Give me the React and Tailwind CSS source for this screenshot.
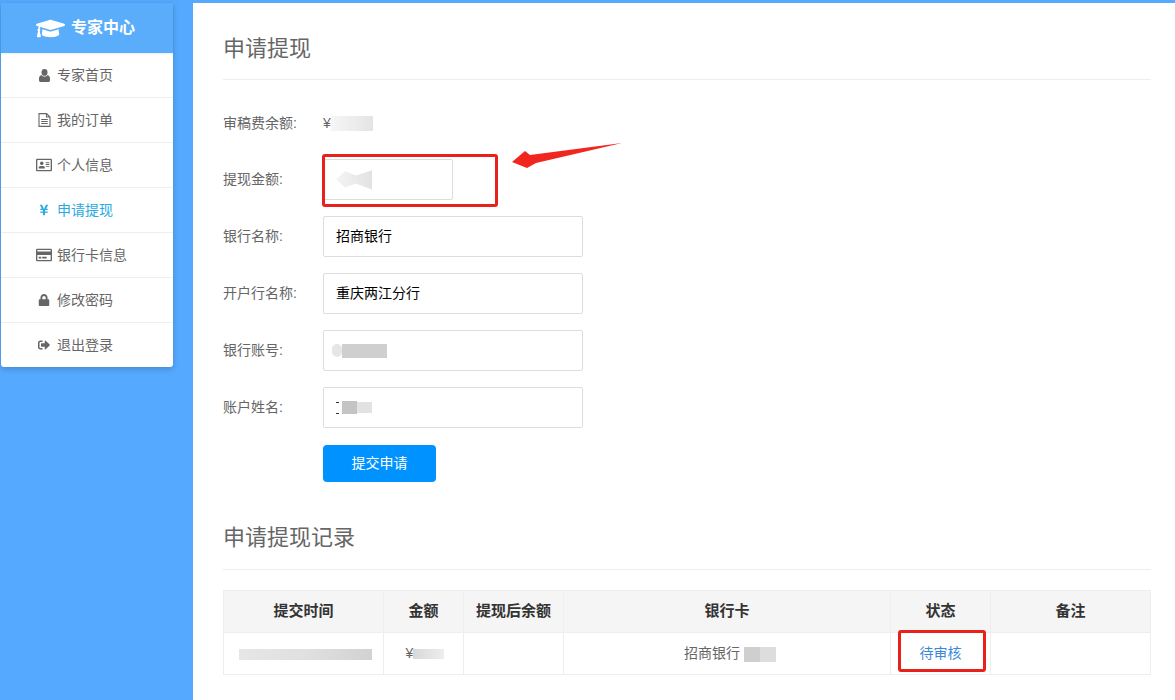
import { FaGraduationCap, FaRegAddressCard, FaYenSign, FaRegCreditCard, FaLock, FaSignOutAlt } from 'react-icons/fa';

const UserIcon = ({ className }) => (
  <svg className={className} width="11" height="13" viewBox="0 0 11 13" fill="currentColor">
    <ellipse cx="5.5" cy="3.4" rx="3" ry="3.4" />
    <path d="M2.4 5.9C1 6.2 0 7.4 0 9.6v1.6C0 12.3.7 13 1.7 13h7.6c1 0 1.7-.7 1.7-1.8V9.6c0-2.2-1-3.4-2.4-3.7C7.8 6.800 6.800 7.500 5.500 7.500S3.200 6.800 2.400 5.900z" />
  </svg>
);

const FileIcon = ({ className }) => (
  <svg className={className} width="13" height="14" viewBox="0 0 13 14" fill="none" stroke="currentColor" strokeWidth="1.1">
    <path d="M1 .6h7.500L12 4v9.400H1zM8.500.6V4H12" />
    <path d="M3.200 6.500h6.600M3.200 8.500h6.600M3.200 10.500h6.600" />
  </svg>
);

const menuItems = [
  { label: '专家首页', icon: UserIcon, size: '' },
  { label: '我的订单', icon: FileIcon, size: '' },
  { label: '个人信息', icon: FaRegAddressCard, size: 'text-[16px]' },
  { label: '申请提现', icon: FaYenSign, size: 'text-[12px]', active: true },
  { label: '银行卡信息', icon: FaRegCreditCard, size: 'text-[16px]' },
  { label: '修改密码', icon: FaLock, size: 'text-[12px]' },
  { label: '退出登录', icon: FaSignOutAlt, size: 'text-[12px]' },
];

const Smudge = ({ className }) => (
  <span className={`inline-block align-middle blur-[0.6px] ${className}`}></span>
);

const FormRow = ({ label, children, className = '' }) => (
  <div className={`flex items-center h-[41px] mb-4 ${className}`}>
    <label className="w-[100px] shrink-0 text-[#666]">{label}:</label>
    {children}
  </div>
);

const TextBox = ({ children, width = 'w-[260px]' }) => (
  <div className={`${width} h-[41px] border border-[#ddd] rounded-[2px] flex items-center px-3 text-black bg-white`}>
    {children}
  </div>
);

const Sidebar = () => (
  <aside className="w-[172px] ml-px self-start shrink-0 bg-white rounded-b-[3px] shadow-[0_2px_6px_rgba(0,0,0,0.2)]">
    <div className="h-[50px] bg-[#5aadfb] flex items-center pl-[35px] gap-[6px] text-white font-bold text-[16px] shadow-[0_1px_2px_rgba(0,0,0,0.08)]">
      <FaGraduationCap className="text-[29px]" />
      <span>专家中心</span>
    </div>
    <ul>
      {menuItems.map((item) => {
        const Icon = item.icon;
        return (
          <li
            key={item.label}
            className={`h-[45px] flex items-center pl-[35px] border-b border-[#eee] last:border-b-0 last:h-[44px] ${item.active ? 'text-[#29abe2]' : 'text-[#666]'}`}
          >
            <span className="w-[16px] flex justify-center mr-[5px]">
              <Icon className={item.size} />
            </span>
            {item.label}
          </li>
        );
      })}
    </ul>
  </aside>
);

const Heading = ({ children, className = 'h-[77px] pt-[14px]' }) => (
  <h2 className={`${className} border-b border-[#eee] flex items-center text-[22px] text-[#666]`}>{children}</h2>
);

const WithdrawForm = () => (
  <div className="pt-[22px]">
    <FormRow label="审稿费余额" className="pt-[2px]">
      <span className="text-[#666]">¥</span>
      <Smudge className="w-[42px] h-[15px] bg-linear-to-r from-[#f6f6f6] to-[#e4e4e4]" />
    </FormRow>
    <FormRow label="提现金额">
      <TextBox width="w-[130px]">
        <Smudge className="w-[36px] h-[22px] bg-linear-to-r from-[#f4f4f4] to-[#e2e2e2] [clip-path:polygon(0_50%,25%_12%,55%_32%,100%_8%,100%_95%,55%_68%,25%_85%)]" />
      </TextBox>
    </FormRow>
    <FormRow label="银行名称">
      <TextBox>招商银行</TextBox>
    </FormRow>
    <FormRow label="开户行名称">
      <TextBox>重庆两江分行</TextBox>
    </FormRow>
    <FormRow label="银行账号">
      <TextBox>
        <Smudge className="-ml-[4px] w-[10px] h-[13px] rounded-full bg-[#e6e6e6]" />
        <Smudge className="w-[45px] h-[14px] bg-[#cfcfcf]" />
      </TextBox>
    </FormRow>
    <FormRow label="账户姓名">
      <TextBox>
        <span className="w-[3px] h-[12px] border-y border-[#333]"></span>
        <Smudge className="ml-[3px] w-[15px] h-[13px] bg-[#c4c4c4]" />
        <Smudge className="w-[15px] h-[11px] bg-[#e2e2e2]" />
      </TextBox>
    </FormRow>
    <button className="ml-[100px] mt-[17px] block w-[113px] h-[37px] rounded-[4px] bg-[#0093ff] text-white">提交申请</button>
  </div>
);

const RecordTable = () => (
  <table className="mt-5 w-[928px] table-fixed border-collapse text-center text-[#666]">
    <thead>
      <tr className="h-[42px] bg-[#f5f5f5] text-[#333] font-bold text-[15px]">
        <th className="w-[160px] border border-[#eee]">提交时间</th>
        <th className="w-[80px] border border-[#eee]">金额</th>
        <th className="w-[100px] border border-[#eee]">提现后余额</th>
        <th className="w-[327px] border border-[#eee]">银行卡</th>
        <th className="w-[100px] border border-[#eee]">状态</th>
        <th className="border border-[#eee]">备注</th>
      </tr>
    </thead>
    <tbody>
      <tr className="h-[42px]">
        <td className="border border-[#eee] pl-1">
          <Smudge className="w-[133px] h-[11px] bg-linear-to-r from-[#e6e6e6] via-[#e0e0e0] to-[#d2d2d2]" />
        </td>
        <td className="border border-[#eee] pl-[3px]">
          ¥<Smudge className="w-[31px] h-[10px] bg-linear-to-r from-[#d8d8d8] to-[#eeeeee]" />
        </td>
        <td className="border border-[#eee]"></td>
        <td className="border border-[#eee] pl-[6px]">
          招商银行 <Smudge className="w-[16px] h-[15px] bg-[#cfcfcf]" /><Smudge className="w-[16px] h-[15px] bg-[#dddddd]" />
        </td>
        <td className="border border-[#eee] text-[#3b87d9]">待审核</td>
        <td className="border border-[#eee]"></td>
      </tr>
    </tbody>
  </table>
);

const App = () => {
  return (
    <div className="relative h-screen overflow-hidden bg-[#55aaff] pt-[3px] flex text-[14px] font-['Liberation_Sans','Noto_Sans_CJK_SC',sans-serif]">
      <Sidebar />
      <main className="ml-5 flex-1 bg-white pl-[30px] pr-6">
        <Heading>申请提现</Heading>
        <WithdrawForm />
        <div className="mt-[10px]">
          <Heading className="h-[78px] pt-[13px]">申请提现记录</Heading>
        </div>
        <RecordTable />
      </main>

      {/* annotations on top of the screenshot */}
      <div className="absolute left-[322px] top-[154px] w-[176px] h-[53px] border-[3px] border-[#e8211c] rounded-[3px]"></div>
      <div className="absolute left-[898px] top-[630px] w-[88px] h-[42px] border-[3px] border-[#e8211c] rounded-[3px]"></div>
      <svg className="absolute left-[510px] top-[141px]" width="114" height="30" viewBox="0 0 114 30">
        <polygon points="2,21 15,10 20,14 112,2 26,22 17,27" fill="#f0261f" />
      </svg>
    </div>
  );
};

export default App;
